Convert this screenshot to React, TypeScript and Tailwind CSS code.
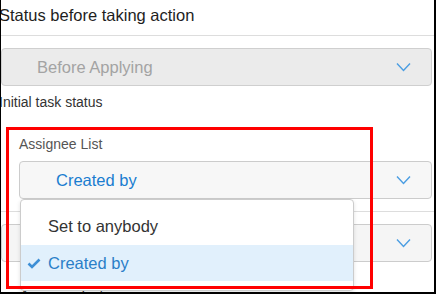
function Chevron() {
  return (
    <svg width="15" height="10" viewBox="0 0 15 10" fill="none" className="shrink-0">
      <polyline points="1,1.5 7.5,8.5 14,1.5" stroke="#4a9de2" strokeWidth="1.4" />
    </svg>
  );
}

function Check() {
  return (
    <svg width="14" height="11" viewBox="0 0 14 11" fill="none" className="shrink-0">
      <polyline points="1.5,5.5 5,9 12.5,1.5" stroke="#3d8fd6" strokeWidth="2.6" />
    </svg>
  );
}

export default function App() {
  return (
    <div className="relative w-[436px] h-[294px] overflow-hidden bg-white font-['Liberation_Sans',Arial,sans-serif]">
      {/* page frame */}
      <div className="absolute inset-0 border-l border-r-2 border-b-2 border-black z-20 pointer-events-none" />

      <div className="h-[36px] border-b border-[#dddddd] pt-[5px]">
        <div className="-ml-[1px] text-[16.5px] leading-[20px] text-[#1e1e1e]">Status before taking action</div>
      </div>

      <div className="mt-[12px] ml-[1px] w-[431px] h-[38px] rounded-[4px] border border-[#cfcfcf] bg-[#ebebeb] flex items-center justify-between pl-[35px] pr-[20px]">
        <span className="text-[16.5px] text-[#a3a3a3]">Before Applying</span>
        <Chevron />
      </div>
      <div className="mt-[6px] -ml-[1px] text-[14px] leading-[20px] text-[#333333]">Initial task status</div>

      <div className="mt-[22px] pb-[12px] border-b border-[#dddddd]">
        <div className="pl-[19px] text-[14px] leading-[20px] text-[#555555]">Assignee List</div>
        <div className="mt-[7px] ml-[19px] w-[413px] h-[38px] rounded-[4px] border border-[#cccccc] bg-[#f7f7f7] flex items-center justify-between pl-[36px] pr-[20px]">
          <span className="text-[16.5px] text-[#1a7dd0]">Created by</span>
          <Chevron />
        </div>
      </div>

      <div className="mt-[12px] ml-[1px] w-[431px] h-[38px] rounded-[4px] border border-[#cccccc] bg-[#f5f5f5] flex items-center justify-end pr-[20px]">
        <Chevron />
      </div>
      <div className="mt-[23px] pl-[20px] text-[14px] leading-[20px] text-[#333333]">Assignee List</div>

      {/* open dropdown menu */}
      <div className="absolute left-[20px] top-[199px] w-[334px] h-[92px] z-[5] bg-white border border-[#cccccc] rounded-[4px] shadow-[0_2px_4px_rgba(0,0,0,0.12)] py-[8px]">
        <div className="h-[37px] flex items-center pl-[27px] text-[16.5px] text-[#333333]">Set to anybody</div>
        <div className="h-[36px] flex items-center pl-[6px] bg-[#e1f0fc] text-[16.5px] text-[#2a7fc8]">
          <Check />
          <span className="ml-[7px]">Created by</span>
        </div>
      </div>

      {/* annotation box */}
      <div className="absolute left-[6px] top-[127px] w-[367px] h-[162px] border-[3px] border-[#ff0000] z-10 pointer-events-none" />
    </div>
  );
}
